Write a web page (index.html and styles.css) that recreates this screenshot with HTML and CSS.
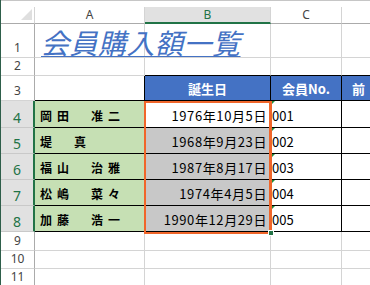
FILE: index.html
```html
<!DOCTYPE html>
<html lang="ja">
<head>
    <meta charset="UTF-8">
    <meta name="viewport" content="width=device-width, initial-scale=1.0">
    <link rel="stylesheet" href="styles.css">
    <title>会員購入額一覧</title>
</head>
<body>
    <div class="window">
        <div class="topline"></div>
        <div class="sheet">
            <!-- column headers -->
            <div class="corner"><span class="tri"></span></div>
            <div class="colhead">A</div>
            <div class="colhead sel">B</div>
            <div class="colhead">C</div>
            <div class="colhead last"></div>

            <!-- row 1 -->
            <div class="rowhead">1</div>
            <div class="cell title-cell"><span class="title">会員購入額一覧</span></div>
            <div class="cell"></div>
            <div class="cell"></div>
            <div class="cell last"></div>

            <!-- row 2 -->
            <div class="rowhead">2</div>
            <div class="cell"></div>
            <div class="cell b-bottom"></div>
            <div class="cell b-bottom"></div>
            <div class="cell b-bottom last"></div>

            <!-- row 3 -->
            <div class="rowhead">3</div>
            <div class="cell b-right b-bottom"></div>
            <div class="cell head b-right b-bottom">誕生日</div>
            <div class="cell head b-right b-bottom">会員No.</div>
            <div class="cell head b-bottom last">前</div>

            <!-- row 4 -->
            <div class="rowhead sel">4</div>
            <div class="cell name b-right b-bottom">岡田　准二</div>
            <div class="cell date active b-right b-bottom">1976年10月5日</div>
            <div class="cell num b-right b-bottom">001</div>
            <div class="cell b-bottom last"></div>

            <!-- row 5 -->
            <div class="rowhead sel">5</div>
            <div class="cell name b-right b-bottom">堤　真</div>
            <div class="cell date b-right b-bottom">1968年9月23日</div>
            <div class="cell num b-right b-bottom">002</div>
            <div class="cell b-bottom last"></div>

            <!-- row 6 -->
            <div class="rowhead sel">6</div>
            <div class="cell name b-right b-bottom">福山　治雅</div>
            <div class="cell date b-right b-bottom">1987年8月17日</div>
            <div class="cell num b-right b-bottom">003</div>
            <div class="cell b-bottom last"></div>

            <!-- row 7 -->
            <div class="rowhead sel">7</div>
            <div class="cell name b-right b-bottom">松嶋　菜々</div>
            <div class="cell date b-right b-bottom">1974年4月5日</div>
            <div class="cell num b-right b-bottom">004</div>
            <div class="cell b-bottom last"></div>

            <!-- row 8 -->
            <div class="rowhead sel">8</div>
            <div class="cell name b-right b-bottom">加藤　浩一</div>
            <div class="cell date b-right b-bottom">1990年12月29日</div>
            <div class="cell num b-right b-bottom">005</div>
            <div class="cell b-bottom last"></div>

            <!-- rows 9-11 -->
            <div class="rowhead">9</div>
            <div class="cell"></div>
            <div class="cell"></div>
            <div class="cell"></div>
            <div class="cell last"></div>

            <div class="rowhead">10</div>
            <div class="cell"></div>
            <div class="cell"></div>
            <div class="cell"></div>
            <div class="cell last"></div>

            <div class="rowhead">11</div>
            <div class="cell"></div>
            <div class="cell"></div>
            <div class="cell"></div>
            <div class="cell last"></div>

            <!-- selection B4:B8 -->
            <div class="selection"><span class="handle"></span></div>
        </div>
    </div>
</body>
</html>
```

FILE: styles.css
```css
body {
    margin: 0;
    background-color: #ffffff;
    font-family: "Noto Sans CJK JP", "Noto Sans", sans-serif;
}


.window {
    width: 370px;
    height: 285px;
    overflow: hidden;
    border-left: 1px solid #2e5e4a;
    box-sizing: border-box;
}


.topline {
    height: 7px;
    border-top: 1px solid #c6c6c6;
    box-sizing: border-box;
}


.sheet {
    position: relative;
    display: grid;
    grid-template-columns: 34px 110px 126px 71px 40px;
    grid-template-rows: 17px 34px 18px 25px 27px 26px 26px 26px 26px 19px 18px 18px;
}


.corner {
    position: relative;
    border-right: 1px solid #d4d4d4;
    border-bottom: 1px solid #ababab;
}


.tri {
    position: absolute;
    right: 2px;
    bottom: 3px;
    width: 0;
    height: 0;
    border-left: 11px solid transparent;
    border-bottom: 11px solid #dfdfdf;
}


.colhead {
    display: flex;
    align-items: center;
    justify-content: center;
    font-family: "Noto Sans", sans-serif;
    font-size: 12px;
    line-height: 14px;
    color: #444444;
    border-right: 1px solid #d4d4d4;
    border-bottom: 1px solid #ababab;
}


.colhead.sel {
    background-color: #e1e1e1;
    color: #217346;
    border-bottom: 2px solid #217346;
}


.colhead.last {
    border-right: none;
}


.rowhead {
    display: flex;
    align-items: flex-end;
    justify-content: center;
    padding-bottom: 2px;
    font-family: "Noto Sans", sans-serif;
    font-size: 12px;
    line-height: 14px;
    color: #444444;
    border-right: 1px solid #ababab;
    border-bottom: 1px solid #d4d4d4;
    box-sizing: border-box;
}


.rowhead.sel {
    background-color: #e1e1e1;
    color: #217346;
    font-size: 14px;
    border-right: 2px solid #217346;
    border-bottom-color: #c9c9c9;
}


.cell {
    display: flex;
    align-items: flex-end;
    border-right: 1px solid #d4d4d4;
    border-bottom: 1px solid #d4d4d4;
    box-sizing: border-box;
    font-size: 13px;
    line-height: 16px;
    padding-bottom: 3px;
    color: #000000;
    white-space: nowrap;
}


.cell.last {
    border-right: none;
}


.b-right {
    border-right-color: #000000;
}


.b-bottom {
    border-bottom-color: #000000;
}


.title-cell {
    padding-left: 6px;
    padding-bottom: 1px;
}


.title {
    position: relative;
    z-index: 1;
    font-size: 28px;
    line-height: 28px;
    font-style: italic;
    letter-spacing: 0.5px;
    color: #4472c4;
    text-decoration: underline;
    text-decoration-thickness: 1px;
    text-underline-offset: 2px;
}


.head {
    background-color: #4472c4;
    color: #ffffff;
    font-weight: 700;
    justify-content: center;
}


.head.last {
    justify-content: flex-start;
    padding-left: 10px;
}


.name {
    background-color: #c6e0b4;
    font-weight: 700;
    font-size: 12px;
    letter-spacing: 5px;
    padding-left: 5px;
}


.date {
    background-color: #c8c8c8;
    justify-content: flex-end;
    padding-right: 3px;
    letter-spacing: 0.6px;
}


.date.active {
    background-color: #ffffff;
}


.num {
    position: relative;
    padding-left: 1px;
}


.num::before {
    content: "";
    position: absolute;
    left: 0;
    top: 0;
    border-top: 4px solid #1e8c3a;
    border-right: 4px solid transparent;
}


/* selection frame over B4:B8 */
.selection {
    position: absolute;
    left: 143px;
    top: 94px;
    width: 128px;
    height: 133px;
    box-sizing: border-box;
    border: 2px solid #f0662a;
    border-right-width: 3px;
    pointer-events: none;
}


.handle {
    position: absolute;
    right: -5px;
    bottom: -4px;
    width: 4px;
    height: 4px;
    background-color: #217346;
    border: 1px solid #ffffff;
}
```
